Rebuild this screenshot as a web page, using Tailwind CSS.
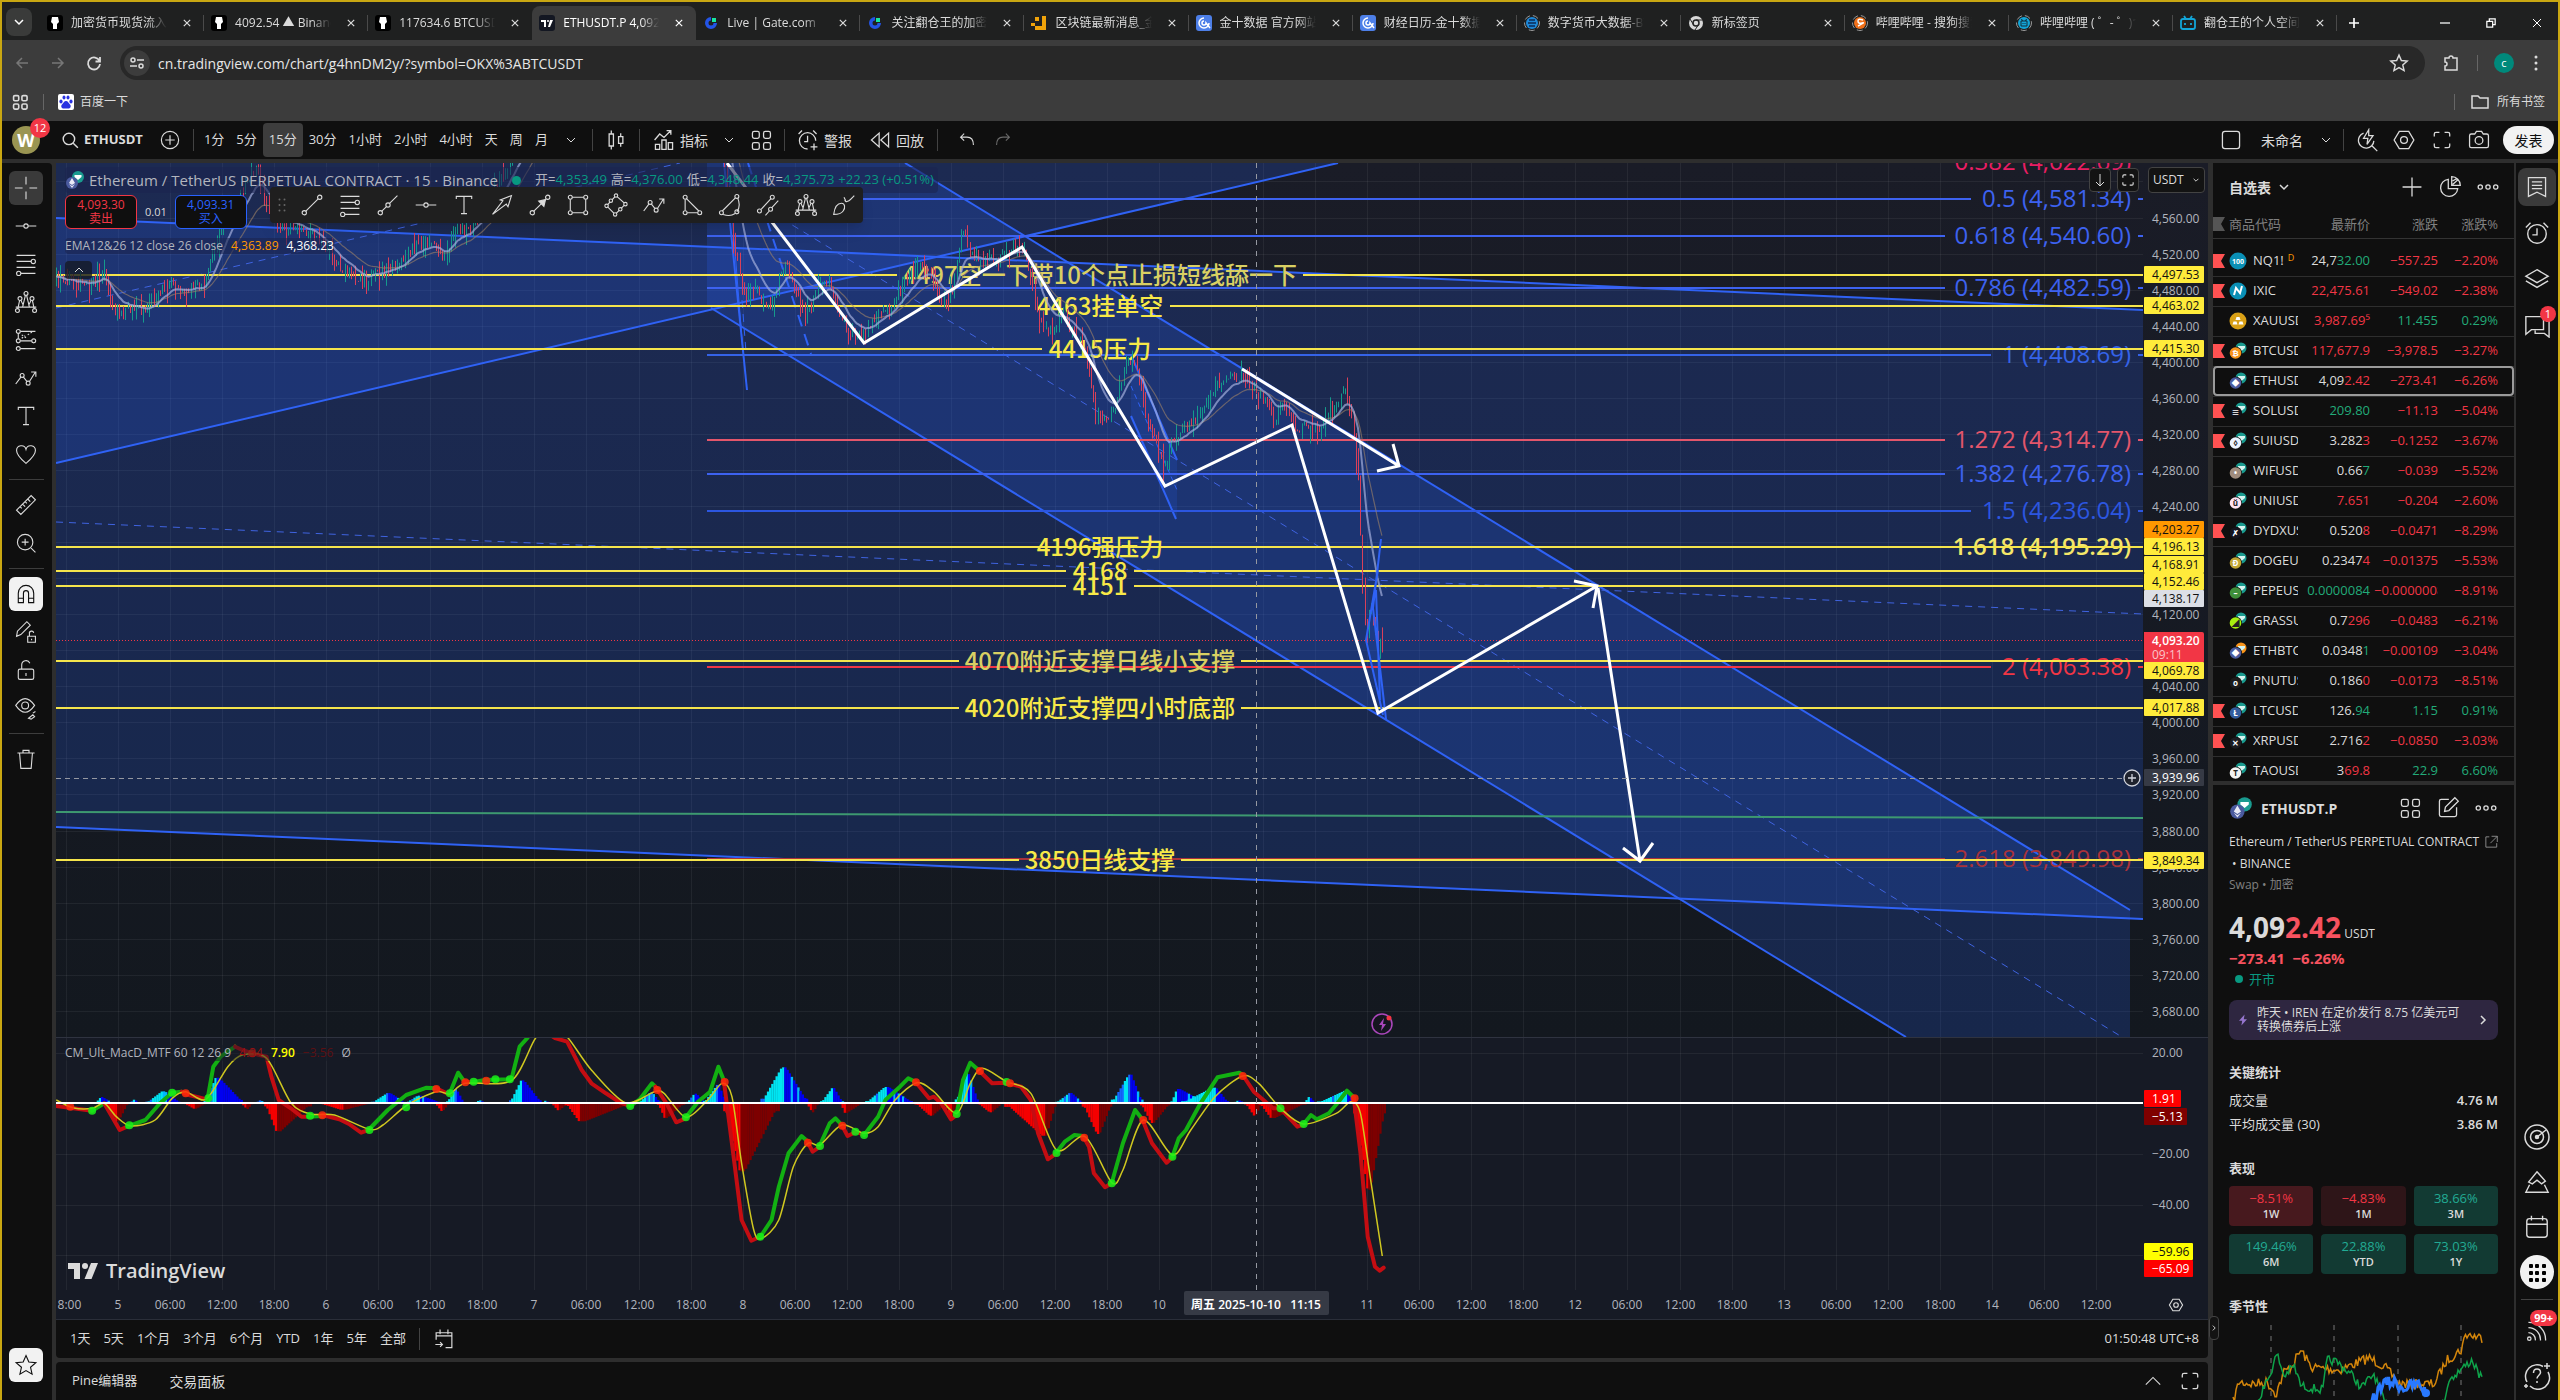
<!DOCTYPE html>
<html lang="zh-CN">

<head>
    <meta charset="UTF-8">
    <meta name="viewport" content="width=device-width, initial-scale=1.0">
    <title>ETHUSDT.P 4,092.42</title>
    <script src="https://cdn.jsdelivr.net/npm/@tailwindcss/browser@4"></script>
</head>

<body class="h-screen overflow-hidden flex flex-col bg-[#2e2e2e] border-2 border-b-0 border-[#c9a712] text-[#dbdbdb] text-[13px] font-['Open_Sans','Noto_Sans_CJK_SC',sans-serif]">

<!-- Icon set -->
<svg class="hidden">
    <symbol id="i-close" viewBox="0 0 10 10"><path d="M1 1l8 8M9 1l-8 8"/></symbol>
    <symbol id="i-down" viewBox="0 0 10 10"><path d="M1 3l4 4 4-4"/></symbol>
    <symbol id="i-up" viewBox="0 0 10 10"><path d="M1 7l4-4 4 4"/></symbol>
    <symbol id="i-right" viewBox="0 0 10 10"><path d="M3 1l4 4-4 4"/></symbol>
    <symbol id="i-search" viewBox="0 0 28 28"><circle cx="12.500" cy="12.500" r="8"/><path d="M18.500 18.500L25 25"/></symbol>
    <symbol id="i-plus-circle" viewBox="0 0 28 28"><circle cx="14" cy="14" r="11"/><path d="M14 8v12M8 14h12"/></symbol>
    <symbol id="i-plus" viewBox="0 0 28 28"><path d="M14 3v22M3 14h22"/></symbol>
    <symbol id="i-candles" viewBox="0 0 28 28"><path d="M6 7h5v14H6zM8.500 3v4M8.500 21v4M17 10h5v8h-5zM19.500 6v4M19.500 18v4"/></symbol>
    <symbol id="i-indicators" viewBox="0 0 28 28"><path d="M4 25v-6h5v6zM11.500 25V14h5v11zM19 25v-8h5v8zM3 14l6-7 5 4 8-8M17 3h5v5"/></symbol>
    <symbol id="i-grid" viewBox="0 0 28 28"><rect x="4" y="4" width="8" height="8" rx="2"/><rect x="17" y="4" width="8" height="8" rx="2"/><rect x="4" y="17" width="8" height="8" rx="2"/><rect x="17" y="17" width="8" height="8" rx="2"/></symbol>
    <symbol id="i-alert" viewBox="0 0 28 28"><path d="M23 15a9.500 9.500 0 1 0-9.500 9.500M13.500 9v7h-4M3 7l4-4M24 7l-4-4M21 18v8M17 22h8"/></symbol>
    <symbol id="i-replay" viewBox="0 0 28 28"><path d="M13 6v16L4 14zM24 6v16l-9-8z"/></symbol>
    <symbol id="i-undo" viewBox="0 0 28 28"><path d="M10 5l-5 5 5 5M5 10h9c6 0 9 4 9 11"/></symbol>
    <symbol id="i-redo" viewBox="0 0 28 28"><path d="M18 5l5 5-5 5M23 10h-9c-6 0-9 4-9 11"/></symbol>
    <symbol id="i-square" viewBox="0 0 28 28"><rect x="4" y="4" width="20" height="20" rx="3"/></symbol>
    <symbol id="i-quick" viewBox="0 0 28 28"><path d="M10 6a9 9 0 1 0 12 9M20 21l6 6M16 2l-6 10h5l-1 7 7-10h-5z"/></symbol>
    <symbol id="i-settings" viewBox="0 0 28 28"><path d="M8.500 4h11l6 10-6 10h-11l-6-10z"/><circle cx="14" cy="14" r="4"/></symbol>
    <symbol id="i-full" viewBox="0 0 28 28"><path d="M5 10V7q0-2 2-2h4M17 5h4q2 0 2 2v3M23 18v3q0 2-2 2h-4M11 23H7q-2 0-2-2v-3"/></symbol>
    <symbol id="i-camera" viewBox="0 0 28 28"><path d="M5 7h4l2-3h6l2 3h4q2 0 2 2v12q0 2-2 2H5q-2 0-2-2V9q0-2 2-2z"/><circle cx="14" cy="14.500" r="4.500"/></symbol>
    <symbol id="i-cross" viewBox="0 0 28 28"><path d="M14 1v9M14 18v9M1 14h9M18 14h9"/></symbol>
    <symbol id="i-hline" viewBox="0 0 28 28"><circle cx="14" cy="14" r="2.500"/><path d="M2 14h9.500M16.500 14H26"/></symbol>
    <symbol id="i-trend" viewBox="0 0 28 28"><circle cx="5" cy="23" r="2.500"/><circle cx="23" cy="5" r="2.500"/><path d="M6.800 21.200L21.200 6.800"/></symbol>
    <symbol id="i-ray" viewBox="0 0 28 28"><circle cx="5" cy="23" r="2.500"/><circle cx="14" cy="14" r="2.500"/><path d="M6.800 21.200L12.200 15.800M15.800 12.200L25 3"/></symbol>
    <symbol id="i-fib" viewBox="0 0 28 28"><path d="M3 4h22M3 11h17M3 18h22M8 25h17"/><circle cx="22.500" cy="11" r="2.500"/><circle cx="5.500" cy="25" r="2.500"/></symbol>
    <symbol id="i-pattern" viewBox="0 0 28 28"><circle cx="4" cy="24" r="2.300"/><circle cx="24" cy="24" r="2.300"/><circle cx="7" cy="10" r="2.300"/><circle cx="21" cy="10" r="2.300"/><circle cx="14" cy="4" r="2.300"/><path d="M4.500 21.700L6.500 12.300M23.500 21.700L21.500 12.300M8 12l3 6M20 12l-3 6M13.300 6.300L10 20M14.700 6.300L18 20M2 20h24"/></symbol>
    <symbol id="i-forecast" viewBox="0 0 28 28"><circle cx="5" cy="4" r="2.300"/><circle cx="5" cy="15" r="2.300"/><circle cx="5" cy="24" r="2.300"/><circle cx="23" cy="15" r="2.300"/><path d="M7.500 4H25M7.500 15h13M7.500 24H25M5 6.500v6"/><path d="M9 12l4-3M16 8l6-4M9 8l6 4" stroke-dasharray="2 2"/></symbol>
    <symbol id="i-path" viewBox="0 0 28 28"><path d="M2 21l6-8M11 13l4 5M18 18l7-11M20 7h5.500v5.500"/><circle cx="9.500" cy="11" r="2.300"/><circle cx="16.500" cy="20" r="2.300"/></symbol>
    <symbol id="i-text" viewBox="0 0 28 28"><path d="M5 7V4h18v3M14 4v20M10.500 24h7"/></symbol>
    <symbol id="i-heart" viewBox="0 0 28 28"><path d="M14 25C8 20 3 15.500 3 10a5.600 5.600 0 0 1 11-1.500A5.600 5.600 0 0 1 25 10c0 5.500-5 10-11 15z"/></symbol>
    <symbol id="i-ruler" viewBox="0 0 28 28"><path d="M3 20L20 3l5 5L8 25zM7 16l2 2M10 13l3 3M13 10l2 2M16 7l3 3"/></symbol>
    <symbol id="i-zoom" viewBox="0 0 28 28"><circle cx="13" cy="13" r="9"/><path d="M20 20l5 5M13 9v8M9 13h8"/></symbol>
    <symbol id="i-magnet" viewBox="0 0 28 28"><path d="M5 24V13a9 9 0 0 1 18 0v11h-6V13a3 3 0 0 0-6 0v11zM5 19h6M17 19h6"/></symbol>
    <symbol id="i-penlock" viewBox="0 0 28 28"><path d="M3 19l1-6L15 2l4 4L8 17zM16 19h9v7h-9zM18 19v-3a2.500 2.500 0 0 1 5-1M20.500 22v1.500"/></symbol>
    <symbol id="i-lock" viewBox="0 0 28 28"><rect x="5" y="13" width="18" height="12" rx="2"/><path d="M9 13V8a5 5 0 0 1 9.500-2M14 17.500v3.500"/></symbol>
    <symbol id="i-eye" viewBox="0 0 28 28"><path d="M2 11q11-16 22 0-11 16-22 0z"/><circle cx="13" cy="11" r="4"/><path d="M17 26l5-4 2 2-4 3zM22 20l3-2"/></symbol>
    <symbol id="i-trash" viewBox="0 0 28 28"><path d="M4 7h20M6.500 7l1.500 18h12L21.500 7M10.500 7V4h7v3"/></symbol>
    <symbol id="i-star" viewBox="0 0 28 28"><path d="M14 3l3.300 7.500 8.200.8-6.200 5.400 1.800 8L14 20.500 6.900 24.700l1.800-8-6.200-5.400 8.200-.8z"/></symbol>
    <symbol id="i-arrow" viewBox="0 0 28 28"><path d="M3 25l12-16-3-1 13-5-4 13-2-3z"/></symbol>
    <symbol id="i-arrowline" viewBox="0 0 28 28"><circle cx="5" cy="23" r="2.500"/><circle cx="23" cy="5" r="2.500"/><path d="M6.800 21.200L16 12"/><path d="M20.500 7.500l-2 8-6-6z" fill="currentColor"/></symbol>
    <symbol id="i-rect" viewBox="0 0 28 28"><circle cx="5" cy="5" r="2.300"/><circle cx="23" cy="5" r="2.300"/><circle cx="5" cy="23" r="2.300"/><circle cx="23" cy="23" r="2.300"/><path d="M7.300 5h13.400M7.300 23h13.400M5 7.300v13.400M23 7.300v13.400"/></symbol>
    <symbol id="i-rotrect" viewBox="0 0 28 28"><path d="M14 3l11 10-12 12L3 15z"/><g fill="#1f1f1f"><circle cx="14" cy="3" r="2"/><circle cx="25" cy="13" r="2"/><circle cx="13" cy="25" r="2"/><circle cx="3" cy="15" r="2"/><circle cx="8" cy="9" r="2"/><circle cx="19" cy="19" r="2"/></g></symbol>
    <symbol id="i-triangle" viewBox="0 0 28 28"><path d="M6 7.500v13M8.500 23h12M7.500 6.500L22 21"/><circle cx="6" cy="5" r="2.300"/><circle cx="6" cy="23" r="2.300"/><circle cx="23" cy="23" r="2.300"/></symbol>
    <symbol id="i-arc" viewBox="0 0 28 28"><path d="M5 21L20 6M23 6q4 9-1 16M6 25q8 3 14-1"/><circle cx="22" cy="4" r="2.300"/><circle cx="4" cy="23" r="2.300"/><circle cx="22" cy="22" r="2.300"/></symbol>
    <symbol id="i-channel" viewBox="0 0 28 28"><circle cx="4" cy="21" r="2.300"/><circle cx="19" cy="5" r="2.300"/><circle cx="17" cy="19" r="2.300"/><path d="M6 19L17.500 6.500M11 26l4.500-5M18.500 17L26 9"/></symbol>
    <symbol id="i-brush" viewBox="0 0 28 28"><path d="M2 25c1-8 4-13 9-13 4 0 5 5 2 9-2 3-5 4-11 4zM15 8q1 6 11-5M14 5l2 4"/></symbol>
    <symbol id="i-more" viewBox="0 0 28 28"><circle cx="5" cy="14" r="2.500"/><circle cx="14" cy="14" r="2.500"/><circle cx="23" cy="14" r="2.500"/></symbol>
    <symbol id="i-pie" viewBox="0 0 28 28"><path d="M12 5a10 10 0 1 0 11 11H12zM16 2v10h10A10 10 0 0 0 16 2zM17 7l5-3M17 11l7-6"/></symbol>
    <symbol id="i-edit" viewBox="0 0 28 28"><path d="M15 4H6q-2 0-2 2v16q0 2 2 2h16q2 0 2-2v-9M10 18l1-5L22 2l4 4-11 11z"/></symbol>
    <symbol id="i-ext" viewBox="0 0 28 28"><path d="M11 5H5v18h19v-7M15 4h10v10M25 4L13 16"/></symbol>
    <symbol id="i-list" viewBox="0 0 28 28"><path d="M4 3h20v22l-10-5-10 5zM8 8h12M8 12h12M8 16h12"/></symbol>
    <symbol id="i-clock" viewBox="0 0 28 28"><circle cx="14" cy="15" r="10"/><path d="M14 9v7H9M2 8l5-5M26 8l-5-5"/></symbol>
    <symbol id="i-layers" viewBox="0 0 28 28"><path d="M14 4l12 7-12 7-12-7zM2 16l12 7 12-7"/></symbol>
    <symbol id="i-chat" viewBox="0 0 28 28"><path d="M2 5h19v14H8l-6 5zM24 10h3v17l-5-4H12v-3"/></symbol>
    <symbol id="i-target" viewBox="0 0 28 28"><circle cx="14" cy="14" r="12"/><circle cx="14" cy="14" r="6.500"/><circle cx="14" cy="14" r="1.500" fill="currentColor"/><path d="M14 14l9-7"/></symbol>
    <symbol id="i-mountain" viewBox="0 0 28 28"><path d="M14 3l9 10-4 3-5-4-5 4-4-2zM6 17l-4 8h24l-4-8"/></symbol>
    <symbol id="i-calendar" viewBox="0 0 28 28"><rect x="3" y="5" width="22" height="20" rx="3"/><path d="M3 11h22M8 2v5M20 2v5"/></symbol>
    <symbol id="i-goto" viewBox="0 0 28 28"><path d="M4 15V6h20v19h-8M4 10h20M9 2v6M19 2v6M3 21h9M9 18l3 3-3 3"/></symbol>
    <symbol id="i-rss" viewBox="0 0 28 28"><circle cx="5" cy="23" r="2"/><path d="M4 16a8 8 0 0 1 8 9M4 10a14 14 0 0 1 14 15M4 4a20 20 0 0 1 20 21"/></symbol>
    <symbol id="i-help" viewBox="0 0 28 28"><path d="M20 4.500A11.500 11.500 0 0 0 4 20M7 24A11.500 11.500 0 0 0 25 10M10.500 11q0-4 3.500-4t3.500 3.500c0 2.500-3.500 3-3.500 6M14 19v2M24 1v6M21 4h6M3 22v4M1 24h4"/></symbol>
</svg>

<!-- Browser tabs -->
<header class="shrink-0">
    <nav id="tabs" class="h-[38px] bg-[#1f2020] flex items-end pl-1 pr-2 text-[12px]">
        <button class="w-[26px] h-7 mb-1 mr-2 shrink-0 rounded-lg bg-[#3a3b3a] flex items-center justify-center" aria-label="搜索标签页">
            <svg class="size-2.5 fill-none stroke-white stroke-[1.5]"><use href="#i-down"/></svg>
        </button>
    </nav>

    <!-- Address bar -->
    <div class="h-[42px] bg-[#3c3c3c] flex items-center pl-[10px] pr-4 gap-4 pt-1">
        <button class="text-[#777] size-5" aria-label="后退"><svg viewBox="0 0 20 20" class="size-5 fill-none stroke-current stroke-[1.5]"><path d="M16 10H5M10 5l-5 5 5 5"/></svg></button>
        <button class="text-[#777] size-5" aria-label="前进"><svg viewBox="0 0 20 20" class="size-5 fill-none stroke-current stroke-[1.5]"><path d="M4 10h11M10 5l5 5-5 5"/></svg></button>
        <button class="size-5" aria-label="刷新"><svg viewBox="0 0 20 20" class="size-5 fill-none stroke-current stroke-[1.800]"><path d="M15.500 8A6 6 0 1 0 16 11M16 4v4.500h-4.500"/></svg></button>
        <div class="flex-1 h-[34px] rounded-full bg-[#282828] flex items-center px-1 gap-2 text-[14px]">
            <span class="size-[26px] rounded-full bg-[#3c3c3c] flex items-center justify-center"><svg viewBox="0 0 16 16" class="size-4 fill-none stroke-current stroke-[1.500]"><circle cx="4" cy="5" r="2"/><path d="M8 5h7M1 11h7"/><circle cx="12" cy="11" r="2"/></svg></span>
            <label for="url" class="sr-only">地址</label>
            <input id="url" type="text" value="cn.tradingview.com/chart/g4hnDM2y/?symbol=OKX%3ABTCUSDT" class="flex-1 bg-transparent text-[#e6e6e6]">
            <svg class="size-5 fill-none stroke-current stroke-2 mr-3"><use href="#i-star"/></svg>
        </div>
        <svg viewBox="0 0 20 20" class="size-5 fill-none stroke-current stroke-[1.500]"><path d="M4 5h4a2 2 0 0 1 4 0h4v12H4v-4a2 2 0 0 0 0-4z"/></svg>
        <span class="w-px h-4 bg-[#666]"></span>
        <span class="size-5 rounded-full bg-[#00897b] text-white text-[11px] flex items-center justify-center">c</span>
        <svg viewBox="0 0 4 16" class="w-1 h-4 fill-current mx-1"><circle cx="2" cy="2" r="1.500"/><circle cx="2" cy="8" r="1.500"/><circle cx="2" cy="14" r="1.500"/></svg>
    </div>

    <!-- Bookmarks -->
    <div class="h-[39px] bg-[#3c3c3c] flex items-center px-[9px] text-[12px]">
        <svg class="size-[18px] fill-none stroke-current stroke-[2.500]"><use href="#i-grid"/></svg>
        <span class="w-px h-4 bg-[#666] mx-[14px]"></span>
        <a href="#" class="flex items-center gap-1.5">
            <svg viewBox="0 0 16 16" class="size-4"><rect width="16" height="16" rx="2" fill="#fff"/><g fill="#2932e1"><ellipse cx="3" cy="7.500" rx="1.600" ry="2"/><ellipse cx="6" cy="3.500" rx="1.500" ry="2"/><ellipse cx="10" cy="3.500" rx="1.500" ry="2"/><ellipse cx="13" cy="7.500" rx="1.600" ry="2"/><path d="M8 7c2 0 2.500 2 4 3.500 1.500 1.500.5 4-1.500 4h-5c-2 0-3-2.500-1.500-4C5.500 9 6 7 8 7z"/></g></svg>
            百度一下
        </a>
        <span class="w-px h-4 bg-[#666] ml-auto mr-4"></span>
        <a href="#" class="flex items-center gap-2 mr-1">
            <svg viewBox="0 0 18 16" class="w-[18px] h-4 fill-none stroke-current stroke-[1.500]"><path d="M1 2h6l2 2h8v10H1z"/></svg>
            所有书签
        </a>
    </div>
</header>

<!-- Chart toolbar -->
<div class="shrink-0 h-[38px] mb-1 bg-[#0f0f0f] flex items-center pl-2.5 pr-1 [&_svg]:fill-none [&_svg]:stroke-current">
    <div class="relative size-7 rounded-full bg-[#9a9552] text-white font-bold text-[18px] flex items-center justify-center">W
        <span class="absolute -top-2 left-[18px] size-5 rounded-full bg-[#f23645] text-[11px] font-normal flex items-center justify-center">12</span>
    </div>
    <button class="flex items-center gap-1 ml-5 font-bold"><svg class="size-5 stroke-2"><use href="#i-search"/></svg>ETHUSDT</button>
    <button class="ml-4" aria-label="对比"><svg class="size-[22px] stroke-[1.500]"><use href="#i-plus-circle"/></svg></button>
    <span class="w-px h-[22px] bg-[#434343] ml-3 mr-1"></span>
    <div id="intervals" class="flex items-center"></div>
    <svg class="size-2.5 ml-3 mr-2"><use href="#i-down"/></svg>
    <span class="w-px h-[22px] bg-[#434343] ml-2"></span>
    <button class="mx-[11px]" aria-label="图表类型"><svg class="size-6 stroke-[1.500]"><use href="#i-candles"/></svg></button>
    <span class="w-px h-[22px] bg-[#434343]"></span>
    <button class="flex items-center gap-1 ml-3 text-[14px]"><svg class="size-6 stroke-[1.500]"><use href="#i-indicators"/></svg>指标</button>
    <svg class="size-2.5 ml-4"><use href="#i-down"/></svg>
    <button class="ml-[15px]" aria-label="模板"><svg class="size-6 stroke-[1.500]"><use href="#i-grid"/></svg></button>
    <span class="w-px h-[22px] bg-[#434343] mx-[11px]"></span>
    <button class="flex items-center gap-1 text-[14px]"><svg class="size-6 stroke-[1.500]"><use href="#i-alert"/></svg>警报</button>
    <button class="flex items-center gap-1 ml-4 text-[14px]"><svg class="size-6 stroke-[1.500]"><use href="#i-replay"/></svg>回放</button>
    <span class="w-px h-[22px] bg-[#434343] mx-[13px]"></span>
    <button class="ml-1.5" aria-label="撤销"><svg class="size-5 stroke-[1.500]"><use href="#i-undo"/></svg></button>
    <button class="ml-4 text-[#6a6a6a]" aria-label="重做"><svg class="size-5 stroke-[1.500]"><use href="#i-redo"/></svg></button>

    <button class="ml-auto flex items-center gap-[18px] text-[14px]"><svg class="size-6 stroke-[1.500]"><use href="#i-square"/></svg>未命名</button>
    <svg class="size-2.5 ml-[18px] mr-3"><use href="#i-down"/></svg>
    <span class="w-px h-[22px] bg-[#434343] mr-[11px]"></span>
    <button class="mr-[13px]" aria-label="快速搜索"><svg class="size-6 stroke-[1.500]"><use href="#i-quick"/></svg></button>
    <button class="mr-[14px]" aria-label="设置"><svg class="size-6 stroke-[1.500]"><use href="#i-settings"/></svg></button>
    <button class="mr-[13px]" aria-label="全屏"><svg class="size-6 stroke-[1.500]"><use href="#i-full"/></svg></button>
    <button class="mr-3" aria-label="快照"><svg class="size-6 stroke-[1.500]"><use href="#i-camera"/></svg></button>
    <button class="h-7 w-[51px] rounded-[14px] bg-[#f2f2f2] text-[#0f0f0f] text-[14px]">发表</button>
</div>

<main class="flex-1 min-h-0 flex">

    <!-- Drawing tools -->
    <nav id="tools" class="w-[50px] mr-1 pr-0.5 shrink-0 bg-[#0f0f0f] rounded-tr flex flex-col items-center pt-[6px] pb-[18px]"></nav>

    <section class="flex-1 min-w-0 flex flex-col">
        <div class="flex-1 relative overflow-hidden bg-[#151a24]">
            <svg id="chart" class="absolute inset-0 w-full h-full" viewBox="56 163 2152 1156" preserveAspectRatio="xMaxYMin slice"></svg>

            <!-- Symbol legend -->
            <div class="absolute left-[9px] top-1 flex items-center h-[26px] gap-1 pr-1 rounded bg-[#1a2550]/60 text-[15px] text-[#b2b5be]">
                <svg viewBox="0 0 20 20" class="size-5"><circle cx="13" cy="7" r="6" fill="#1a9b8f"/><path d="M9.500 5h7v2l-3.500 3-3.500-3z" fill="#fff"/><circle cx="7" cy="13" r="6" fill="#4a5a9e"/><path d="M7 8l3 5-3 2-3-2zM7 16l3-2-3 4-3-4z" fill="#e8eaf6"/></svg>
                <h1>Ethereum / TetherUS PERPETUAL CONTRACT · 15 · Binance</h1>
                <span class="size-[9px] rounded-full bg-[#089981] mx-2.5"></span>
                <p class="text-[13px] flex gap-1 text-[#089981]">
                    <span><span class="text-[#b2b5be]">开=</span>4,353.49</span>
                    <span><span class="text-[#b2b5be]">高=</span>4,376.00</span>
                    <span><span class="text-[#b2b5be]">低=</span>4,348.44</span>
                    <span><span class="text-[#b2b5be]">收=</span>4,375.73</span>
                    <span>+22.23 (+0.51%)</span>
                </p>
            </div>
            <div class="absolute left-[9px] top-8 flex items-center gap-2 text-[12px] leading-[14px]">
                <button class="w-[72px] h-[34px] rounded-md border border-[#f23645] bg-[#0f0f0f] text-[#f23645]">4,093.30<br>卖出</button>
                <span class="text-[11px]">0.01</span>
                <button class="w-[72px] h-[34px] rounded-md border border-[#2962ff] bg-[#0f0f0f] text-[#2962ff]">4,093.31<br>买入</button>
            </div>
            <p class="absolute left-[9px] top-[75px] flex gap-2 rounded bg-[#1a2550]/60 text-[12px] leading-4 text-[#b2b5be]">EMA12&amp;26 12 close 26 close
                <span class="text-[#ff9800]">4,363.89</span><span class="text-white">4,368.23</span></p>
            <button class="absolute left-[9px] top-[98px] w-[27px] h-[18px] rounded bg-[#151a24]/80 flex items-center justify-center" aria-label="收起"><svg class="size-2.5 fill-none stroke-current"><use href="#i-up"/></svg></button>

            <!-- Favourite drawings -->
            <div id="favs" class="absolute left-[214px] top-6 h-9 rounded bg-[#1f1f1f] shadow-lg flex items-center"></div>

            <!-- Scale controls -->
            <div class="absolute right-[3px] top-1 flex items-center gap-[6px]">
                <button class="w-[22px] h-6 rounded border border-[#434343] bg-[#131313] flex items-center justify-center" aria-label="移动"><svg viewBox="0 0 14 14" class="size-3.5 fill-none stroke-current"><path d="M7 1v12M3 9l4 4 4-4"/></svg></button>
                <button class="w-[22px] h-6 rounded border border-[#434343] bg-[#131313] flex items-center justify-center" aria-label="最大化"><svg class="size-4 fill-none stroke-current stroke-2"><use href="#i-full"/></svg></button>
                <div class="relative ml-[3px]">
                    <label for="unit" class="sr-only">单位</label>
                    <select id="unit" class="appearance-none w-[57px] h-[26px] pl-1 rounded border border-[#434343] bg-[#131313] text-[12px]"><option>USDT</option></select>
                    <svg class="absolute right-1.5 top-2.5 size-1.5 fill-none stroke-current stroke-[1.500] pointer-events-none"><use href="#i-down"/></svg>
                </div>
            </div>

            <!-- MACD legend -->
            <p class="absolute left-[9px] top-[882px] flex gap-2 rounded bg-[#161a25]/50 text-[12px] leading-4 text-[#b2b5be]">CM_Ult_MacD_MTF 60 12 26 9
                <span class="text-[#9c0f12]">4.34</span><span class="text-[#ffff00] font-semibold">7.90</span><span class="text-[#5c1013]">−3.56</span><span>Ø</span></p>

            <a href="#" class="absolute left-3 bottom-[34px] flex items-center gap-2 text-[20px] leading-7 font-semibold text-[#dbdbdb]">
                <svg viewBox="0 0 30 16" class="w-[30px] h-4 fill-current"><path d="M0 0h12v16H6V6H0z"/><circle cx="17" cy="3" r="3"/><path d="M23 0h7l-6.500 16h-7z"/></svg>
                TradingView
            </a>
            <button class="absolute right-6 bottom-1.5" aria-label="时间轴设置"><svg class="size-4 fill-none stroke-current stroke-2"><use href="#i-settings"/></svg></button>
        </div>

        <!-- Date ranges -->
        <div class="shrink-0 h-[39px] mb-1 border-t border-[#2a2e39] bg-[#0f0f0f] rounded-b flex items-center gap-[13px] pl-[14px] pr-[9px]">
            <button>1天</button><button>5天</button><button>1个月</button><button>3个月</button><button>6个月</button><button>YTD</button><button>1年</button><button>5年</button><button>全部</button>
            <span class="w-px h-[22px] bg-[#434343]"></span>
            <button aria-label="前往"><svg class="size-[22px] fill-none stroke-current stroke-[1.500]"><use href="#i-goto"/></svg></button>
            <button class="ml-auto">01:50:48 UTC+8</button>
        </div>

        <!-- Bottom panel -->
        <div class="shrink-0 h-[38px] bg-[#0f0f0f] rounded-t flex items-center pl-4 pr-1.5">
            <button class="mr-8">Pine编辑器</button>
            <button class="text-[14px]">交易面板</button>
            <svg class="size-[18px] ml-auto mr-4 fill-none stroke-current stroke-[0.600]"><use href="#i-up"/></svg>
            <svg class="size-6 fill-none stroke-current stroke-[1.500]"><use href="#i-full"/></svg>
        </div>
    </section>

    <!-- Watchlist and details -->
    <aside class="relative w-[301px] ml-[5px] mr-0.5 shrink-0 flex flex-col">
        <section class="h-[618px] shrink-0 bg-[#0f0f0f] overflow-hidden">
            <div class="h-12 flex items-center pl-4 pr-3.5 gap-[14px] [&_svg]:fill-none [&_svg]:stroke-current [&_svg]:stroke-[1.500]">
                <button class="flex items-center gap-2 font-bold text-[14px] mr-auto">自选表 <svg class="size-2.5"><use href="#i-down"/></svg></button>
                <button aria-label="添加"><svg class="size-6"><use href="#i-plus"/></svg></button>
                <button aria-label="分布"><svg class="size-6"><use href="#i-pie"/></svg></button>
                <button aria-label="更多"><svg class="size-6"><use href="#i-more"/></svg></button>
            </div>
            <table class="w-full table-fixed border-collapse">
                <colgroup><col class="w-10"><col class="w-[45px]"><col class="w-[72px]"><col class="w-[68px]"><col class="w-[76px]"></colgroup>
                <thead class="text-[#808080]">
                <tr class="h-[27px] border-b border-[#333]">
                    <th colspan="2" class="text-left font-normal"><span class="flex items-center gap-1"><svg viewBox="0 0 12 14" class="w-3 h-3.5 fill-[#555]"><path d="M0 0h12l-4 7 4 7H0z"/></svg>商品代码</span></th>
                    <th class="text-right font-normal">最新价</th>
                    <th class="text-right font-normal">涨跌</th>
                    <th class="text-right font-normal pr-4">涨跌%</th>
                </tr>
                <tr class="h-2"><td colspan="5"></td></tr>
                </thead>
                <tbody id="watch"></tbody>
            </table>
        </section>

        <section class="flex-1 min-h-0 overflow-hidden mt-1 bg-[#0f0f0f] px-4 text-[12px]">
            <div class="h-[46px] flex items-center gap-[14px] [&_button_svg]:fill-none [&_button_svg]:stroke-current [&_button_svg]:stroke-[1.500]">
                <h2 class="mr-auto flex items-center gap-2 font-bold text-[14px]">
                    <svg viewBox="0 0 20 20" class="size-6"><circle cx="13" cy="7" r="6" fill="#1a9b8f"/><path d="M9.500 5h7v2l-3.500 3-3.500-3z" fill="#fff"/><circle cx="7" cy="13" r="6" fill="#4a5a9e"/><path d="M7 8l3 5-3 2-3-2zM7 16l3-2-3 4-3-4z" fill="#e8eaf6"/></svg>
                    ETHUSDT.P</h2>
                <button aria-label="布局"><svg class="size-6"><use href="#i-grid"/></svg></button>
                <button aria-label="编辑"><svg class="size-6"><use href="#i-edit"/></svg></button>
                <button aria-label="更多"><svg class="size-6"><use href="#i-more"/></svg></button>
            </div>
            <p class="leading-[22px]"><span class="inline-flex items-center gap-1 whitespace-nowrap">Ethereum / TetherUS PERPETUAL CONTRACT <svg class="size-4 fill-none stroke-[#999] stroke-[1.500]"><use href="#i-ext"/></svg></span><br>&nbsp;• BINANCE</p>
            <p class="leading-5 text-[#808080]">Swap • 加密</p>
            <p class="mt-4 text-[28px] leading-8 font-bold">4,09<span class="text-[#f7525f]">2.42</span> <span class="text-[12px] font-normal -ml-1">USDT</span></p>
            <p class="-mt-1 text-[15px] leading-6 font-bold text-[#f7525f]">−273.41 &nbsp;−6.26%</p>
            <p class="flex items-center gap-1.5 pl-1.5 leading-[18px] text-[13px] text-[#089981]"><span class="size-2 rounded-full bg-[#089981]"></span>开市</p>
            <a href="#" class="mt-3 h-10 rounded-lg bg-[#2e2640] flex items-center gap-2.5 pl-2.5 pr-2.5 leading-[14px]">
                <svg viewBox="0 0 10 14" class="w-2 h-3 fill-[#9575cd]"><path d="M7 0L0 8h4l-1 6 7-8H6z"/></svg>
                <span class="flex-1">昨天 • IREN 在定价发行 8.75 亿美元可转换债券后上涨</span>
                <svg class="size-2.5 fill-none stroke-current stroke-[1.500]"><use href="#i-right"/></svg>
            </a>
            <h3 class="mt-[22px] text-[13px] leading-5 font-bold">关键统计</h3>
            <dl class="mt-1.5 grid grid-cols-2 text-[13px] leading-6"><dt>成交量</dt><dd class="text-right font-semibold">4.76 M</dd><dt>平均成交量 (30)</dt><dd class="text-right font-semibold">3.86 M</dd></dl>
            <h3 class="mt-[22px] text-[13px] leading-5 font-bold">表现</h3>
            <div id="perf" class="mt-2 grid grid-cols-3 gap-2"></div>
            <h3 class="mt-[22px] text-[13px] leading-5 font-bold">季节性</h3>
            <svg id="season" class="w-full mt-1.5 h-[80px]" viewBox="0 0 269 80" preserveAspectRatio="none"></svg>
        </section>
        <button class="absolute -left-1 bottom-[60px] w-2.5 h-6 rounded border border-[#434343] bg-[#131313] flex items-center justify-center" aria-label="折叠"><svg class="size-1.5 fill-none stroke-current stroke-[1.500]"><use href="#i-right"/></svg></button>
    </aside>

    <!-- Side rail -->
    <nav class="w-[42px] shrink-0 bg-[#0f0f0f] flex flex-col items-center pt-px pb-0.5 [&_svg]:fill-none [&_svg]:stroke-current [&_svg]:stroke-[1.500]">
        <div class="h-[46px] flex items-center"><button class="w-[38px] h-[38px] rounded-lg bg-[#3a3a3a] flex items-center justify-center" aria-label="自选表"><svg class="size-6"><use href="#i-list"/></svg></button></div>
        <button class="h-[46px]" aria-label="警报"><svg class="size-[26px]"><use href="#i-clock"/></svg></button>
        <button class="h-[46px]" aria-label="对象树"><svg class="size-[26px]"><use href="#i-layers"/></svg></button>
        <button class="h-[46px] relative" aria-label="聊天"><svg class="size-[26px]"><use href="#i-chat"/></svg><span class="absolute -right-1.5 top-1 size-4 rounded-full bg-[#f23645] text-white text-[11px] leading-4">1</span></button>
        <button class="mt-auto h-[45px]" aria-label="筛选器"><svg class="size-7"><use href="#i-target"/></svg></button>
        <button class="h-[45px]" aria-label="Pine"><svg class="size-[26px]"><use href="#i-mountain"/></svg></button>
        <button class="h-[45px]" aria-label="日历"><svg class="size-[26px]"><use href="#i-calendar"/></svg></button>
        <div class="h-[45px] flex items-center"><button class="size-[34px] rounded-full bg-[#f2f2f2] grid grid-cols-3 gap-[3px] p-[9px]" aria-label="产品"><i class="bg-black rounded-[1px] size-1"></i><i class="bg-black rounded-[1px] size-1"></i><i class="bg-black rounded-[1px] size-1"></i><i class="bg-black rounded-[1px] size-1"></i><i class="bg-black rounded-[1px] size-1"></i><i class="bg-black rounded-[1px] size-1"></i><i class="bg-black rounded-[1px] size-1"></i><i class="bg-black rounded-[1px] size-1"></i><i class="bg-black rounded-[1px] size-1"></i></button></div>
        <span class="w-8 h-px bg-[#434343] mt-[5px] mb-2"></span>
        <button class="h-[45px] relative" aria-label="动态"><svg class="size-6"><use href="#i-rss"/></svg><span class="absolute -right-2 top-0.5 px-1 h-4 rounded-full bg-[#f23645] text-white text-[11px] leading-4 font-bold">99+</span></button>
        <button class="h-[45px]" aria-label="帮助"><svg class="size-7"><use href="#i-help"/></svg></button>
    </nav>
</main>

<script>
    const $ = (s) => document.querySelector(s)
    const use = (name, cls) => `<svg class="${cls}"><use href="#i-${name}"/></svg>`

    // Tabs
    const GATE = '<path d="M8 2a6 6 0 1 0 6 6h-3.500A2.500 2.500 0 1 1 8 5.500z" fill="#2354e6"/><path d="M9 3h4v4H9z" fill="#17e5a1"/>'
    const BOX = '<rect width="16" height="16" rx="3" fill="#000"/><path d="M5 2h6l1 5-2 2v5H6V9L4 7z" fill="#fff"/>'
    const JIN = '<rect width="16" height="16" rx="3" fill="#4d7fe8"/><path d="M8 3a5 5 0 1 0 5 5M8 6a2 2 0 1 0 2 2l4 5" fill="none" stroke="#fff" stroke-width="1.500"/>'
    const BILI = '<path d="M3 4h10q2 0 2 2v6q0 2-2 2H3q-2 0-2-2V6q0-2 2-2zM4 1l2 3M12 1l-2 3M5 8v2M11 8v2" fill="none" stroke="#12a5d8" stroke-width="1.800"/>'
    const tabs = [
        [BOX, '加密货币现货流入'], [BOX, '4092.54 ▲ Binance'], [BOX, '117634.6 BTCUSDT'],
        ['<rect width="16" height="16" rx="3" fill="#131722"/><path d="M2 5h5v7H5V7H2zM11 5h3l-3 7H9z" fill="#fff"/><circle cx="9" cy="6" r="1" fill="#fff"/>', 'ETHUSDT.P 4,092.42'],
        [GATE, 'Live | Gate.com'], [GATE, '关注翻仓王的加密'],
        ['<path d="M11 1h4v14H4v-4h7zM4 2h4v4H4zM0 8h4v3H0z" fill="#f0a30a"/>', '区块链最新消息_金色'],
        [JIN, '金十数据 官方网站'], [JIN, '财经日历-金十数据'],
        ['<circle cx="8" cy="8" r="7.500" fill="none" stroke="#999" stroke-dasharray="6 3"/><circle cx="8" cy="8" r="6" fill="#1e88d8"/><path d="M5 5h6M4 8h8M5 11h6" stroke="#0b2a55" stroke-width="1.500"/>', '数字货币大数据-BTC'],
        ['<circle cx="8" cy="8" r="7" fill="#d8d8d8"/><circle cx="8" cy="8" r="3" fill="#d8d8d8" stroke="#222" stroke-width="1.500"/><path d="M8 5h7M5.400 9.500L2 4M10.600 9.500L7 15" stroke="#222"/>', '新标签页'],
        ['<circle cx="8" cy="8" r="7.500" fill="none" stroke="#999" stroke-dasharray="6 3"/><circle cx="8" cy="8" r="6" fill="#f0701a"/><path d="M11 5q-5-2-5 1t4 2-4 3" fill="none" stroke="#fff" stroke-width="1.500"/>', '哔哩哔哩 - 搜狗搜索'],
        ['<circle cx="8" cy="8" r="7.500" fill="none" stroke="#999" stroke-dasharray="6 3"/><circle cx="8" cy="8" r="6" fill="#12a5d8"/><path d="M5 6h6v5H5zM5.500 4l1 2M10.500 4l-1 2M7 8v1M9 8v1" fill="none" stroke="#102a36"/>', '哔哩哔哩 ( ゜- ゜)つロ'],
        [BILI, '翻仓王的个人空间'],
    ]
    $('#tabs').innerHTML += tabs.map(([ico, t], i) => `
        <a href="#" class="flex-1 min-w-0 h-[34px] flex items-center pl-[7px] pr-3 rounded-t-lg ${i === 3 ? 'bg-[#3c3c3c] text-white' : ''}">
            <svg viewBox="0 0 16 16" class="size-4 shrink-0">${ico}</svg>
            <span class="flex-1 ml-2 mr-2 overflow-hidden whitespace-nowrap mask-r-from-80%">${t}</span>
            ${use('close', 'size-2 ml-2 shrink-0 fill-none stroke-current stroke-[1.500]')}
            <span class="w-px h-4 -mr-3 ml-3 ${i === 2 || i === 3 ? '' : 'bg-[#4a4a4a]'}"></span>
        </a>`).join('') + `
        <div class="w-[213px] shrink-0 h-[34px] flex items-center pl-3 pr-2 text-white">
            <svg viewBox="0 0 12 12" class="size-2.5 mr-auto fill-none stroke-current stroke-2"><path d="M6 0v12M0 6h12"/></svg>
            <svg viewBox="0 0 12 12" class="size-2.5 mr-9 fill-none stroke-current stroke-[1.500]"><path d="M0 6h12"/></svg>
            <svg viewBox="0 0 12 12" class="size-2.5 mr-9 fill-none stroke-current stroke-[1.500]"><path d="M1 4h7v7H1zM4 4V1h7v7H8"/></svg>
            ${use('close', 'size-2.5 fill-none stroke-current')}
        </div>`

    // Interval buttons
    $('#intervals').innerHTML = ['1分', '5分', '15分', '30分', '1小时', '2小时', '4小时', '天', '周', '月'].map((t) =>
        `<button class="h-[34px] px-[6px] rounded ${t === '15分' ? 'bg-[#3d3d3d]' : ''}">${t}</button>`).join('')

    // Left tools
    const tools = ['cross', 'hline', 'fib', 'pattern', 'forecast', 'path', 'text', 'heart', '', 'ruler', 'zoom', '', 'magnet', 'penlock', 'lock', 'eye', '', 'trash']
    $('#tools').innerHTML = tools.map((n) => n
        ? `<button class="h-[38px] w-[34px] py-0.5" aria-label="${n}"><span class="h-[34px] rounded-md flex items-center justify-center ${n === 'cross' ? 'bg-[#3a3a3a]' : n === 'magnet' ? 'bg-[#f2f2f2] text-[#0f0f0f]' : ''}">${use(n, 'size-6 fill-none stroke-current stroke-[1.300]')}</span></button>`
        : '<span class="w-[35px] h-px my-1.5 bg-[#3d3d3d]"></span>').join('')
        + `<button class="mt-auto size-[34px] rounded-md bg-[#f2f2f2] text-[#0f0f0f] flex items-center justify-center" aria-label="收藏">${use('star', 'size-6 fill-none stroke-current stroke-[1.300]')}</button>`

    $('#favs').innerHTML = '<svg viewBox="0 0 8 14" class="w-2 h-3.5 ml-2 mr-[7px] fill-[#666]"><circle cx="1.500" cy="1.500" r="1"/><circle cx="6.500" cy="1.500" r="1"/><circle cx="1.500" cy="7" r="1"/><circle cx="6.500" cy="7" r="1"/><circle cx="1.500" cy="12.500" r="1"/><circle cx="6.500" cy="12.500" r="1"/></svg>'
        + ['trend', 'fib', 'ray', 'hline', 'text', 'arrow', 'arrowline', 'rect', 'rotrect', 'path', 'triangle', 'arc', 'channel', 'pattern', 'brush'].map((n) =>
            `<button class="w-[38px] flex justify-center" aria-label="${n}">${use(n, 'size-6 fill-none stroke-current stroke-[1.300]')}</button>`).join('')

    // Watchlist: flag, symbol, coin colour, glyph, last (plain part | coloured part), colour, change, pct
    const R = '#f23645', G = '#22ab79'
    const rows = [
        [1, 'NQ1!', '#0a8fb5', '100', '24,7', '32.00', G, '−557.25', '−2.20%'],
        [1, 'IXIC', '#0a8fb5', 'N', '', '22,475.61', R, '−549.02', '−2.38%'],
        [0, 'XAUUSD', '#d9a016', '▲', '', '3,987.69⁵', R, '11.455', '0.29%'],
        [1, 'BTCUSDT', '#f7931a', '₿', '', '117,677.9', R, '−3,978.5', '−3.27%'],
        [0, 'ETHUSDT', '#4a5a9e', '◆', '4,09', '2.42', R, '−273.41', '−6.26%'],
        [1, 'SOLUSDT', '#101018', '≡', '', '209.80', G, '−11.13', '−5.04%'],
        [1, 'SUIUSDT', '#eaf3ff', '◊', '3.282', '3', R, '−0.1252', '−3.67%'],
        [0, 'WIFUSDT', '#a08c7d', '•', '0.66', '7', G, '−0.039', '−5.52%'],
        [0, 'UNIUSDT', '#ffe3f1', 'ŭ', '', '7.651', R, '−0.204', '−2.60%'],
        [1, 'DYDXUSDT', '#15151f', '✗', '0.520', '8', R, '−0.0471', '−8.29%'],
        [0, 'DOGEUSDT', '#c2a633', 'Ð', '0.2347', '4', R, '−0.01375', '−5.53%'],
        [0, 'PEPEUSDT', '#3f8f3a', '–', '', '0.0000084', G, '−0.0000008', '−8.91%'],
        [0, 'GRASSUSDT', '#a6f00f', '◢', '0.7', '296', R, '−0.0483', '−6.21%'],
        [0, 'ETHBTC', '#4a5a9e', '◆', '0.0348', '1', G, '−0.00109', '−3.04%'],
        [0, 'PNUTUSDT', '#1c1c1c', 'o', '0.186', '0', R, '−0.0173', '−8.51%'],
        [1, 'LTCUSDT', '#345d9d', 'Ł', '126.', '94', G, '1.15', '0.91%'],
        [1, 'XRPUSDT', '#1c1c22', '✕', '2.716', '2', R, '−0.0850', '−3.03%'],
        [0, 'TAOUSDT', '#f4f4f4', 'T', '3', '69.8', R, '22.9', '6.60%'],
    ]
    const light = ['#eaf3ff', '#ffe3f1', '#a6f00f', '#f4f4f4']
    const coin = (i, c, g) => {
        const ink = light.includes(c) ? '#222' : '#fff'
        if (i === 1) return `<svg viewBox="0 0 18 18" class="size-[18px]"><circle cx="9" cy="9" r="8.500" fill="${c}"/><path d="M5 13l2-7 4 5 2-7" fill="none" stroke="#fff" stroke-width="2"/></svg>`
        if (i === 2) return `<svg viewBox="0 0 18 18" class="size-[18px]"><circle cx="9" cy="9" r="8.500" fill="${c}"/><path d="M7.500 5h3l1 3h-5zM4.500 9.500h3l1 3h-5zM10.500 9.500h3l1 3h-5z" fill="#fff"/></svg>`
        if (i === 0) return `<svg viewBox="0 0 18 18" class="size-[18px]"><circle cx="9" cy="9" r="8.500" fill="${c}"/><text x="9" y="12" font-size="7" font-weight="700" fill="#fff" text-anchor="middle">${g}</text></svg>`
        const back = i === 13 ? '#f7931a' : '#1a9b8f'
        return `<svg viewBox="0 0 18 18" class="size-[18px]"><circle cx="12" cy="6" r="5.500" fill="${back}"/><path d="M9 4h7v2l-3.500 3L9 6z" fill="#d5f5f0"/><circle cx="6.500" cy="11" r="6.500" fill="#0f0f0f"/><circle cx="6.500" cy="11" r="5.800" fill="${c}"/><text x="6.500" y="14" font-size="8" font-weight="700" fill="${ink}" text-anchor="middle">${g}</text></svg>`
    }
    $('#watch').innerHTML = rows.map(([f, s, c, g, a, b, bc, ch, p], i) => {
        const cc = ch[0] === '−' ? R : G
        return `<tr class="h-[30px] border-b border-[#2e2e2e] ${i === 4 ? 'outline outline-2 -outline-offset-2 outline-[#9a9a9a] rounded' : ''}">
            <td><span class="flex items-center gap-1"><svg viewBox="0 0 12 14" class="w-3 h-3.5 ${f ? 'fill-[#ff5252]' : 'fill-none'}"><path d="M0 0h12l-4 7 4 7H0z"/></svg>${coin(i, c, g)}</span></td>
            <td class="overflow-hidden whitespace-nowrap">${s}${i ? '' : '<sup class="text-[#ff9800] text-[9px] ml-1">D</sup>'}</td>
            <td class="text-right whitespace-nowrap">${a}<span style="color:${bc}">${b}</span></td>
            <td class="text-right overflow-hidden whitespace-nowrap ${i === 11 ? 'pl-1' : ''}" style="color:${cc}">${ch}</td>
            <td class="text-right pr-4" style="color:${cc}">${p}</td></tr>`
    }).join('')

    // Performance tiles
    $('#perf').innerHTML = [['−8.51%', '1W', 'bg-[#47191e] text-[#f23645]'], ['−4.83%', '1M', 'bg-[#2e1518] text-[#f23645]'], ['38.66%', '3M', 'bg-[#123a33] text-[#22ab94]'],
        ['149.46%', '6M', 'bg-[#123a33] text-[#22ab94]'], ['22.88%', 'YTD', 'bg-[#123a33] text-[#22ab94]'], ['73.03%', '1Y', 'bg-[#123a33] text-[#22ab94]']].map(([v, l, c]) =>
        `<div class="h-10 rounded pt-1 text-center leading-4 text-[13px] ${c}">${v}<div class="text-[11px] font-semibold text-[#dbdbdb]">${l}</div></div>`).join('')

    let seed = 7
    const rnd = () => (seed = (seed * 16807) % 2147483647) / 2147483647
    const lerp = (pts, x) => {
        let i = 1
        while (i < pts.length - 1 && pts[i][0] < x) i++
        const [x0, y0] = pts[i - 1], [x1, y1] = pts[i]
        return y0 + (y1 - y0) * (x - x0) / (x1 - x0)
    }

    // Seasonality
    const noisy = (pts, amp) => {
        let d = ''
        for (let x = pts[0][0]; x <= pts[pts.length - 1][0]; x += 1.5) d += `${d ? 'L' : 'M'}${x} ${(lerp(pts, x) + (rnd() - .5) * amp).toFixed(1)}`
        return d
    }
    $('#season').innerHTML = [42, 105, 169, 232].map((x) => `<path d="M${x} 3V80" stroke="#777" stroke-dasharray="5 6"/>`).join('')
        + `<path d="${noisy([[4, 80], [10, 60], [25, 62], [38, 60], [47, 72], [55, 50], [62, 45], [72, 28], [82, 45], [110, 48], [140, 36], [155, 44], [170, 62], [205, 62], [218, 38], [232, 28], [237, 12], [253, 16]], 10)}" fill="none" stroke="#d4860b" stroke-width="1.500"/>`
        + `<path d="${noisy([[28, 80], [40, 55], [48, 32], [55, 54], [65, 44], [72, 64], [94, 68], [98, 38], [108, 40], [125, 55], [132, 66], [145, 52], [155, 80], [170, 95], [212, 90], [220, 58], [235, 45], [243, 38], [253, 58]], 9)}" fill="none" stroke="#0ea34a" stroke-width="1.500"/>`
        + `<path d="${noisy([[143, 80], [153, 62], [165, 60], [175, 66], [190, 62], [197, 70]], 12)}" fill="none" stroke="#2979ff" stroke-width="3"/><circle cx="197" cy="71" r="4" fill="#2979ff"/>`

    // ---- Main chart ----
    const priceY = (p) => Math.round(217.5 + (4560 - p) * 0.9015)
    const dayX = (d) => 118 + 208.2 * (d - 5)
    const BLUE = '#2f62f5', YEL = '#f5e54c'
    const line = (x1, y1, x2, y2, c, w = 2, extra = '') => `<path d="M${x1} ${y1}L${x2} ${y2}" stroke="${c}" stroke-width="${w}" fill="none" ${extra}/>`
    const text = (x, y, t, c, size, extra = '') => `<text x="${x}" y="${y}" fill="${c}" font-size="${size}" ${extra}>${t}</text>`
    let s = `<defs><clipPath id="pane"><path d="M56 163H2143V1037H56z"/></clipPath><clipPath id="sub"><path d="M56 1038H2143V1290H56z"/></clipPath>
        <linearGradient id="bg" x1="0" y1="0" x2="0" y2="1"><stop offset="0" stop-color="#1a1c27"/><stop offset="1" stop-color="#13181f"/></linearGradient></defs>
        <path d="M56 163H2208V1037H56z" fill="url(#bg)"/><path d="M56 1037H2208V1319H56z" fill="#161a25"/>`

    // Grid
    for (let i = -1; i < 39; i++) s += line(Math.round(dayX(5) + i * 52.05) + .5, 163, Math.round(dayX(5) + i * 52.05) + .5, 1290, '#fff', 1, 'stroke-opacity=".06"')
    for (let p = 4600; p >= 3680; p -= 40) s += line(56, priceY(p) + .5, 2143, priceY(p) + .5, '#fff', 1, 'stroke-opacity=".06"')
    for (const y of [1053.5, 1154.5, 1205.5, 1255.5]) s += line(56, y, 2143, y, '#fff', 1, 'stroke-opacity=".06"')
    s += line(56, 1037.5, 2208, 1037.5, '#2f3340', 1)

    // Channels
    s += '<g clip-path="url(#pane)">'
    s += `<g fill="#2962ff" fill-opacity=".2"><path d="M56 163H1338L56 463.600z"/><path d="M56 218L2143 310V919L56 827z"/><path d="M707 163H905L2130 910V1037H1906L711 308L707 306z"/></g>`
    s += `<path d="M1131 355L1177 460V519L1131 416zM1381 540L1373 608L1386 719L1366 640z" fill="#2962ff" fill-opacity=".15"/>`
    s += line(56, 463, 1338, 163, BLUE) + line(56, 218, 2143, 310, BLUE) + line(56, 827, 2143, 919, BLUE)
    s += line(905, 163, 2130, 910, BLUE) + line(711, 308, 1906, 1037, BLUE)
    s += line(56, 522, 2143, 614, '#3f63e0', 1, 'stroke-dasharray="7 6"') + line(748, 198, 2122, 1037, '#3f63e0', 1, 'stroke-dasharray="7 6"') + line(56, 308, 680, 163, '#3f63e0', 1, 'stroke-dasharray="7 6"')
    s += line(724, 163, 747, 390, BLUE) + line(728, 163, 743, 352, BLUE, 1) + line(748, 163, 811, 354, BLUE, 2, 'stroke-dasharray="12 8"') + line(742, 300, 746, 352, BLUE, 1, 'stroke-dasharray="8 6"')
    s += line(1131, 355, 1177, 460, BLUE) + line(1131, 416, 1176, 519, BLUE) + line(1131, 386, 1177, 490, BLUE, 1, 'stroke-dasharray="5 4"')
    s += line(56, 812, 2143, 818, '#3d9970')

    // Fib levels
    const fib = [[162, '0.382 (4,622.69)', '#e91e63', 1955, 0], [199, '0.5 (4,581.34)', '#3d62f0', 1971], [236, '0.618 (4,540.60)', '#3d62f0', 1945], [288, '0.786 (4,482.59)', '#3d62f0', 1945], [355, '1 (4,408.69)', '#3563e8', 1991],
        [440, '1.272 (4,314.77)', '#e4566b', 1945], [474, '1.382 (4,276.78)', '#3d62f0', 1945], [511, '1.5 (4,236.04)', '#2c56e0', 1971], [547, '1.618 (4,195.29)', '#f5e76a', 2143, 1], [667, '2 (4,063.38)', '#f23645', 1991], [859, '2.618 (3,849.98)', '#a8323a', 1945]]
    for (const [y, t, c, x2, flag] of fib) {
        if (flag !== 0) s += line(707, y, x2, y, c, 2) + line(2138, y, 2143, y, c, 2)
        s += text(2131, y + 8, t, c, 24, `text-anchor="end" ${flag === 1 ? 'font-weight="600"' : ''}`)
    }

    // Price levels with captions
    const levels = [[275, '4497空一下带10个点止损短线舔一下', 203, 1], [306, '4463挂单空', 70], [349, '4415压力', 58], [547, '4196强压力', 0], [571, '4168', 34], [586, '4151', 34],
        [661, '4070附近支撑日线小支撑', 141, 1], [708, '4020附近支撑四小时底部', 141], [860, '3850日线支撑', 81]]
    for (const [y, t, gap, dim] of levels) {
        s += line(56, y, 1100 - gap, y, YEL) + line(1100 + gap, y, 2143, y, YEL)
        s += text(1100, y + 9, t, dim ? '#d9d063' : '#f7e948', 24, 'text-anchor="middle" font-weight="500" font-family="Noto Sans CJK SC"')
    }
    s += line(56, 640.5, 2143, 640.5, '#f23645', 1, 'stroke-dasharray="1 2"')

    // Candles and EMAs
    const track = [[56, 277], [75, 282], [90, 288], [103, 270], [113, 310], [120, 315], [135, 306], [146, 312], [160, 288], [170, 283], [190, 290], [205, 285], [212, 255], [220, 225], [240, 195], [257, 165], [265, 200], [280, 228], [300, 228], [320, 240], [335, 262], [350, 275], [365, 280], [380, 272], [400, 265], [415, 245], [432, 242], [445, 258], [455, 225], [465, 235], [480, 210], [500, 180], [516, 150], [540, 100], [715, 100], [724, 163], [735, 250], [745, 300], [755, 285], [765, 310], [773, 305], [780, 268], [787, 265], [797, 290], [805, 318], [812, 305], [820, 280], [830, 285], [840, 315], [850, 335], [862, 335], [875, 320], [890, 305], [905, 280], [915, 270], [925, 265], [935, 285], [945, 305], [952, 290], [958, 250], [962, 230], [970, 255], [985, 262], [1000, 258], [1015, 250], [1025, 252], [1035, 300], [1043, 330], [1050, 325], [1065, 322], [1080, 340], [1090, 375], [1095, 415], [1105, 420], [1115, 405], [1125, 365], [1135, 360], [1140, 385], [1150, 430], [1160, 455], [1166, 470], [1172, 440], [1185, 430], [1200, 415], [1210, 395], [1222, 380], [1240, 377], [1255, 390], [1265, 405], [1275, 420], [1285, 400], [1295, 430], [1305, 425], [1315, 428], [1330, 415], [1345, 390], [1352, 420], [1358, 480], [1363, 600], [1366, 640], [1370, 600], [1376, 640], [1383, 645]]
    let e12 = 277, e26 = 277, p12 = '', p26 = '', candles = '', prev = 277
    for (let x = 56; x < 1384; x += 2.17) {
        const c = lerp(track, x) + (rnd() - .5) * 10
        const hi = Math.min(prev, c) - rnd() * rnd() * 18, lo = Math.max(prev, c) + rnd() * rnd() * 18
        const cx = Math.round(x) + .5
        candles += line(cx, hi.toFixed(1), cx, lo.toFixed(1), c > prev ? '#d9405a' : '#159a8c', 1)
        e12 += (c - e12) * 2 / 13
        e26 += (c - e26) * 2 / 27
        p12 += `${p12 ? 'L' : 'M'}${x.toFixed(1)} ${e12.toFixed(1)}`
        p26 += `${p26 ? 'L' : 'M'}${x.toFixed(1)} ${e26.toFixed(1)}`
        prev = c
    }
    s += candles + `<path d="${p26}" fill="none" stroke="#a08468" stroke-opacity=".6" stroke-width="1.200"/><path d="${p12}" fill="none" stroke="#a3aedb" stroke-opacity=".7" stroke-width="2"/>`
    s += `<path d="M1381 539L1373 608L1386 719M1378 570L1366 640L1383 715M1376 590L1380 700" fill="none" stroke="${BLUE}" stroke-width="2"/>`

    // Arrows
    s += '<g fill="none" stroke="#fff" stroke-width="3"><path d="M727 163L864 343L1022 247L1165 486L1292 425L1378 713L1597 586M1574 581L1597 586L1593 608"/><path d="M1598 588L1640 861M1623 848L1640 861L1653 843"/><path d="M1242 369L1399 466M1393 444L1399 466L1377 471"/></g>'
    s += '<circle cx="1382" cy="1024" r="10" fill="#15151f" stroke="#ab47bc" stroke-width="1.500"/><path d="M1384 1018l-5 7h3l-1 6 5-7h-3z" fill="#ab47bc"/><circle cx="1389" cy="1018" r="2.500" fill="#f23645"/>'
    s += '</g>'

    // MACD: points are kept on two strips and mapped into the pane
    const mx = (k, x) => (k ? 740 : 0) + x / 2.063
    const my = (y) => 1020 + y / 3
    const hist = [
        [0, 195, 207, 230, 18], [0, 215, 240, 262, -55], [0, 265, 275, 285, 10], [0, 300, 335, 370, 35], [0, 375, 400, 425, -17], [0, 420, 445, 500, 76], [0, 495, 508, 520, -18], [0, 525, 535, 545, 8], [0, 545, 570, 640, -85], [0, 655, 705, 765, -20], [0, 765, 800, 835, 30], [0, 835, 862, 910, 22], [0, 895, 910, 925, -24], [0, 920, 938, 955, 42], [0, 975, 988, 1000, 8], [0, 1050, 1075, 1115, 68], [0, 1118, 1124, 1130, 8], [0, 1135, 1150, 1170, -22], [0, 1165, 1195, 1300, -55], [0, 1315, 1342, 1360, 32], [0, 1355, 1370, 1410, -45], [0, 1415, 1432, 1455, 28], [0, 1450, 1480, 1495, 55], [0, 1492, 1527, 1605, -205],
        [1, 42, 88, 138, 107], [1, 135, 148, 160, -28], [1, 165, 190, 210, 45], [1, 205, 215, 250, -30], [1, 258, 300, 355, 48], [1, 360, 392, 425, -38], [1, 420, 435, 445, -50], [1, 443, 467, 490, 90], [1, 488, 515, 540, -28], [1, 545, 628, 650, -98], [1, 650, 680, 705, 30], [1, 705, 737, 765, -93], [1, 765, 803, 828, 85], [1, 825, 848, 885, -60], [1, 888, 900, 960, 42], [1, 910, 978, 1005, 46], [1, 1015, 1027, 1040, 8], [1, 1040, 1060, 1075, -38], [1, 1070, 1095, 1165, -45], [1, 1162, 1172, 1185, 18], [1, 1190, 1252, 1265, 38], [1, 1265, 1295, 1330, -260]]
    s += '<g clip-path="url(#sub)">'
    for (const [k, a, m, b, h] of hist) {
        for (let x = mx(k, a); x < mx(k, b); x += 2.17) {
            const up = x <= mx(k, m)
            const f = up ? (x - mx(k, a)) / (mx(k, m) - mx(k, a)) : (mx(k, b) - x) / (mx(k, b) - mx(k, m))
            const hh = Math.abs(h) / 3 * Math.max(.12, Math.min(1, f * 1.1))
            const col = h > 0 ? (up ? (rnd() > .85 ? '#1565ff' : '#00e5f2') : (rnd() > .85 ? '#00b7ff' : '#0000f0')) : (up ? '#f50000' : '#7d0000')
            s += `<rect x="${x.toFixed(1)}" y="${h > 0 ? 1103 - hh : 1103}" width="2.400" height="${hh.toFixed(1)}" fill="${col}"/>`
        }
    }
    const g = '#12b012', r = '#c40d12'
    const segs = [
        [0, r, [116, 258, 190, 272]], [0, g, [190, 272, 215, 250]], [0, r, [215, 250, 247, 330, 262, 320]], [0, g, [262, 320, 300, 300, 330, 250, 355, 218, 375, 215]], [0, r, [375, 215, 390, 225, 425, 238]], [0, g, [428, 238, 440, 140, 455, 110, 485, 80]], [0, r, [485, 80, 500, 90, 520, 100, 550, 110, 560, 170, 575, 240, 600, 265, 622, 290, 635, 290]], [0, g, [635, 290, 665, 288]], [0, r, [665, 285, 700, 298, 720, 312, 745, 338, 760, 330]],
        [0, g, [760, 330, 800, 270, 838, 225, 880, 203, 900, 205]], [0, r, [900, 205, 925, 222]], [0, g, [928, 220, 945, 158, 958, 185]], [0, r, [958, 185, 975, 187]], [0, g, [975, 187, 1000, 180, 1055, 178, 1072, 80, 1088, 54, 1100, 20]], [0, r, [1130, 40, 1145, 54, 1170, 65, 1200, 150, 1220, 190, 1250, 220, 1280, 248, 1300, 258]], [0, g, [1300, 258, 1320, 238, 1345, 190, 1352, 200]], [0, r, [1352, 200, 1375, 250, 1395, 307, 1415, 295]],
        [0, g, [1415, 292, 1440, 245, 1465, 215, 1482, 140, 1493, 180]], [0, r, [1493, 180, 1510, 370, 1530, 600, 1550, 662, 1568, 650]],
        [1, g, [42, 650, 65, 600, 80, 500, 100, 400, 127, 348, 138, 362]], [1, r, [138, 362, 150, 395, 165, 380]], [1, g, [165, 375, 185, 310, 197, 295, 210, 315]], [1, r, [210, 315, 222, 348, 240, 335, 256, 345]], [1, g, [256, 345, 285, 290, 300, 240, 330, 200, 347, 175, 362, 185]], [1, r, [362, 185, 390, 235, 400, 230, 415, 250, 435, 298, 447, 285]],
        [1, g, [447, 280, 460, 180, 475, 128, 492, 150]], [1, r, [492, 150, 520, 190, 550, 188, 580, 200, 600, 240, 615, 340, 635, 418, 653, 400]], [1, g, [653, 397, 670, 365, 690, 345, 708, 348]], [1, r, [708, 348, 720, 380, 730, 460, 753, 502, 767, 490]], [1, g, [767, 488, 790, 370, 815, 270, 830, 298]], [1, r, [830, 298, 850, 370, 880, 428, 892, 412]], [1, g, [892, 410, 905, 355, 920, 330, 950, 250, 985, 172, 1030, 158, 1037, 165]],
        [1, r, [1037, 165, 1060, 215, 1100, 265, 1115, 265, 1150, 320, 1163, 314]], [1, g, [1163, 312, 1178, 285, 1190, 298, 1215, 280, 1235, 245, 1252, 212, 1266, 232]], [1, r, [1266, 232, 1280, 400, 1295, 650, 1310, 740, 1320, 752, 1328, 743]]]
    for (const [k, c, p] of segs) {
        let d = ''
        for (let i = 0; i < p.length; i += 2) d += `${i ? 'L' : 'M'}${mx(k, p[i]).toFixed(1)} ${my(p[i + 1]).toFixed(1)}`
        s += `<path d="${d}" fill="none" stroke="${c}" stroke-width="4" stroke-linejoin="round" stroke-linecap="round"/>`
    }
    const sig = [[0, [116, 240, 150, 263, 190, 265, 215, 250, 240, 290, 270, 318, 320, 300, 355, 235, 383, 215, 425, 238, 470, 140, 500, 105, 550, 115, 600, 248, 640, 282, 690, 285, 762, 328, 790, 315, 840, 255, 900, 215, 928, 222, 960, 190, 1055, 182, 1105, 54, 1140, 20, 1172, 54, 1220, 150, 1290, 248, 1350, 215, 1370, 220, 1415, 292, 1460, 240, 1490, 190, 1510, 230, 1530, 430, 1555, 630]],
        [1, [45, 655, 80, 600, 110, 440, 140, 370, 165, 375, 210, 315, 256, 340, 285, 320, 320, 240, 365, 188, 400, 215, 447, 280, 475, 190, 500, 145, 550, 185, 600, 220, 653, 390, 712, 350, 767, 488, 790, 450, 832, 300, 892, 405, 930, 330, 980, 230, 1037, 168, 1070, 190, 1115, 265, 1163, 312, 1230, 280, 1260, 245, 1280, 280, 1300, 470, 1325, 708]]]
    const sp = sig.flatMap(([k, p]) => p.reduce((o, v, i) => (i % 2 ? o[o.length - 1].push(my(v)) : o.push([mx(k, v)]), o), []))
    // Catmull-Rom through the signal points
    let sd = `M${sp[0]}`
    for (let i = 0; i < sp.length - 1; i++) {
        const a = sp[i - 1] || sp[i], b = sp[i], c = sp[i + 1], e = sp[i + 2] || c
        sd += `C${b[0] + (c[0] - a[0]) / 7} ${b[1] + (c[1] - a[1]) / 7} ${c[0] - (e[0] - b[0]) / 7} ${c[1] - (e[1] - b[1]) / 7} ${c}`
    }
    s += `<path d="${sd}" fill="none" stroke="#d0c820" stroke-width="1.500"/>`
    const dots = [[0, 'g', [190, 272, 267, 316, 355, 218, 430, 235, 640, 287, 762, 330, 838, 262, 928, 220, 977, 185, 1022, 178, 1052, 178, 1300, 258, 1415, 292]], [0, 'r', [145, 260, 383, 220, 520, 100, 665, 286, 900, 207, 960, 187, 1003, 182, 1356, 210, 1495, 186]],
        [1, 'g', [42, 650, 165, 378, 238, 335, 256, 345, 447, 282, 550, 186, 653, 399, 767, 490, 892, 410, 1115, 265, 1163, 312]], [1, 'r', [140, 368, 211, 317, 363, 187, 495, 153, 557, 190, 710, 353, 832, 300, 1037, 168, 1268, 235]]]
    for (const [k, c, p] of dots) for (let i = 0; i < p.length; i += 2) s += `<circle cx="${mx(k, p[i]).toFixed(1)}" cy="${my(p[i + 1]).toFixed(1)}" r="4" fill="${c === 'g' ? '#19f019' : '#ff2a0a'}" fill-opacity=".85"/>`
    s += '</g>' + line(56, 1103, 2143, 1103, '#fff')

    // Crosshair
    s += line(1256.5, 163, 1256.5, 1290, '#9598a1', 1, 'stroke-dasharray="5 6"') + line(56, 778.5, 2124, 778.5, '#9598a1', 1, 'stroke-dasharray="5 4"')
    s += '<circle cx="2132" cy="778" r="8" fill="#1e222d" stroke="#d1d4dc" stroke-width="1.300"/><path d="M2128 778h8M2132 774v8" stroke="#d1d4dc" stroke-width="1.300"/>'

    // Price axis
    for (const p of [4560, 4520, 4480, 4440, 4400, 4360, 4320, 4280, 4240, 4120, 4040, 4000, 3960, 3920, 3880, 3840, 3800, 3760, 3720, 3680])
        s += text(2152, priceY(p) + 5, p.toLocaleString('en-US') + '.00', '#b2b5be', 12)
    for (const [y, t] of [[1053, '20.00'], [1154, '−20.00'], [1205, '−40.00']]) s += text(2152, y + 4, t, '#b2b5be', 12)
    const tags = [[275, '4,497.53'], [306, '4,463.02'], [349, '4,415.30'], [530, '4,203.27', '#ff9800'], [547, '4,196.13'], [565, '4,168.91'], [582, '4,152.46'], [599, '4,138.17', '#dcdfe6'], [671, '4,069.78'], [708, '4,017.88'], [778, '3,939.96', '#363a45', '#fff'], [861, '3,849.34'],
        [1099, '1.91', '#ff0000', '#fff', 37], [1117, '−5.13', '#800000', '#fff', 43], [1252, '−59.96', '#ffff00', '#111', 49], [1269, '−65.09', '#ff0000', '#fff', 49]]
    s += '<path d="M2144 632h58q2 0 2 2v27q0 2-2 2h-58z" fill="#f23645"/>' + text(2152, 645, '4,093.20', '#fff', 12, 'font-weight="600"') + text(2152, 659, '09:11', '#fbc3c8', 12)
    for (const [y, t, c = '#ffeb3b', ink = '#111', w = 60] of tags) s += `<rect x="2144" y="${y - 9}" width="${w}" height="17" rx="1" fill="${c}"/>` + text(2152, y + 4, t, ink, 12)

    // Time axis, leaving out the labels under the crosshair badge
    const hours = ['', '06:00', '12:00', '18:00']
    for (let i = -1; i < 39; i++) {
        const h = (i + 4) % 4, x = Math.round(dayX(5) + i * 52.05)
        if (x > 1184 && x < 1329) continue
        s += text(x, 1309, h ? hours[h] : 5 + i / 4, '#b2b5be', 12, 'text-anchor="middle"')
    }
    s += '<rect x="1184" y="1291" width="145" height="24" rx="2" fill="#363a45"/>' + text(1256, 1309, '周五 2025-10-10 &#160; 11:15', '#fff', 12, 'text-anchor="middle" font-weight="600"')
    $('#chart').innerHTML = s
</script>
</body>

</html>
